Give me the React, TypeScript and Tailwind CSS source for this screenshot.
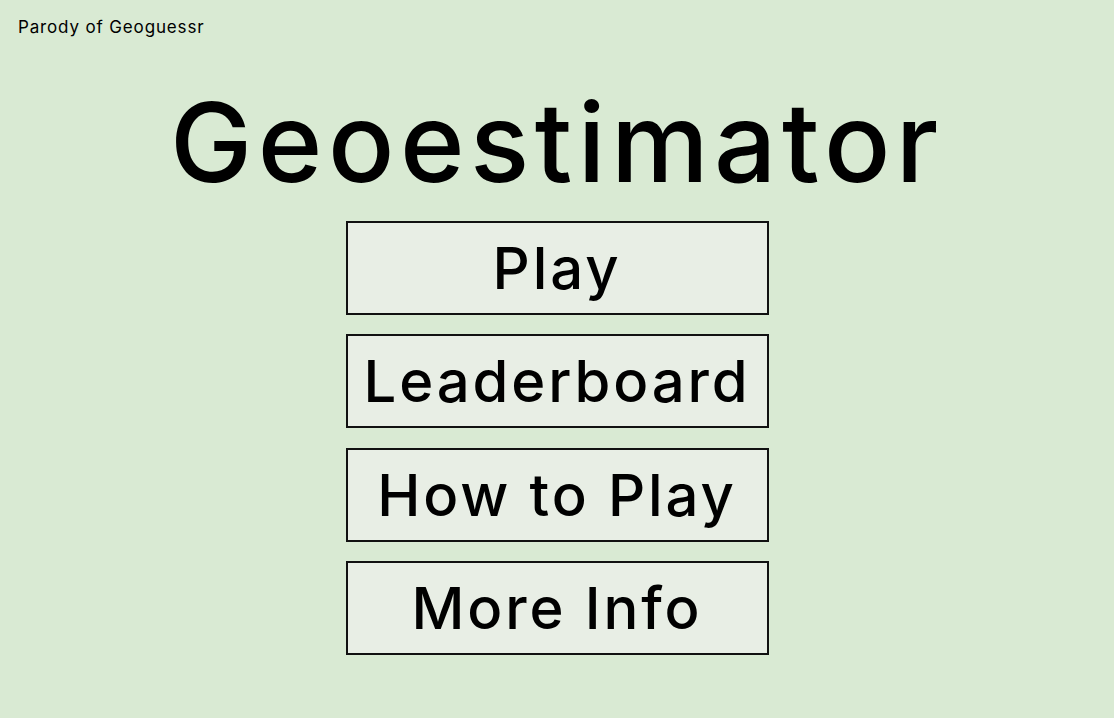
const BUTTONS = ['Play', 'Leaderboard', 'How to Play', 'More Info'];

export default function App() {
  return (
    <div className="min-h-screen bg-[#d9ead3] text-black font-['Inter',_'Noto_Sans',_sans-serif]">
      <p className="pl-[18px] pt-[17px] text-[17px] leading-[20px] tracking-[0.05em]">Parody of Geoguessr</p>
      <h1 className="mt-[50px] text-center text-[110px] leading-[110px] font-medium tracking-[0.05em]">
        Geoestimator
      </h1>
      <div className="mt-[24px] flex flex-col items-center gap-[19.3px]">
        {BUTTONS.map((label) => (
          <button
            key={label}
            type="button"
            className="w-[423px] h-[94px] border-2 border-[#111] bg-[#e8eee5] text-[58px] leading-none font-medium tracking-[0.05em]"
          >
            {label}
          </button>
        ))}
      </div>
    </div>
  );
}
